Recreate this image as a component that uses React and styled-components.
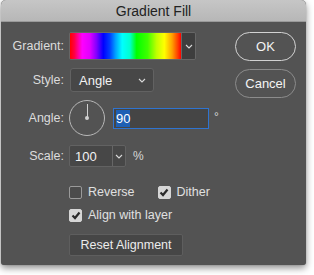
import React from 'react'
import styled, { createGlobalStyle } from 'styled-components'

const Global = createGlobalStyle`
  body {
    margin: 0;
    background: #ffffff;
    font-family: "Liberation Sans", Arial, sans-serif;
  }
`

const Page = styled.div`
  width: 314px;
  height: 275px;
  padding-left: 1px;
  box-sizing: border-box;
`

const Window = styled.div`
  width: 305px;
  height: 265px;
  border-radius: 5px 5px 3px 3px;
  overflow: hidden;
  background: #535353;
  box-shadow: 0 3px 7px rgba(0, 0, 0, 0.45), 0 0 1px rgba(0, 0, 0, 0.4);
  display: flex;
  flex-direction: column;
`

const TitleBar = styled.div`
  height: 22px;
  flex: none;
  background: linear-gradient(#c6c6c6, #b7b7b7);
  border-bottom: 1px solid #9a9a9a;
  box-sizing: border-box;
  display: flex;
  align-items: center;
  justify-content: center;
  font-size: 14px;
  color: #222;
`

const Body = styled.div`
  flex: 1;
  display: flex;
`

const Form = styled.div`
  flex: 1;
  display: flex;
  flex-direction: column;
`

const Row = styled.div`
  display: grid;
  grid-template-columns: 63px 1fr;
  column-gap: 5px;
  align-items: center;
  height: ${p => p.$h}px;
  margin-top: ${p => p.$mt}px;
`

const Label = styled.div`
  text-align: right;
  font-size: 12.5px;
  color: #dcdcdc;
`

const Controls = styled.div`
  display: flex;
  align-items: center;
  height: 100%;
`

const GradientBox = styled.div`
  display: flex;
  width: 127px;
  height: 28px;
  border: 1px solid #666;
  border-radius: 2px;
  box-sizing: border-box;
  overflow: hidden;
`

const Swatch = styled.div`
  flex: 1;
  background: linear-gradient(
    to right,
    #ff0000 0%,
    #ff0044 4%,
    #ff00ff 11%,
    #e000ff 18%,
    #8000ff 24%,
    #0000ff 30%,
    #0040ff 36%,
    #00a0ff 41%,
    #00ffff 47%,
    #00ffd0 54%,
    #00ff00 60%,
    #40ff00 70%,
    #c0ff00 78%,
    #ffff00 85%,
    #ffa000 92%,
    #ff4000 97%,
    #ff0000 100%
  );
`

const Arrow = styled.div`
  width: ${p => p.$w || 14}px;
  flex: none;
  display: flex;
  align-items: center;
  justify-content: center;
  background: ${p => p.$bg || 'transparent'};
  border-left: ${p => (p.$divider ? '1px solid #666' : 'none')};
  height: 100%;
  box-sizing: border-box;
`

const Select = styled.div`
  width: 84px;
  height: 24px;
  margin-left: 1px;
  display: flex;
  align-items: center;
  justify-content: space-between;
  padding: 0 7px 0 8px;
  box-sizing: border-box;
  background: #474747;
  border: 1px solid #626262;
  border-radius: 3px;
  color: #f2f2f2;
  font-size: 13px;
`

const Dial = styled.div`
  position: relative;
  width: 36px;
  height: 36px;
  border: 1px solid #b8b8b8;
  border-radius: 50%;
  box-sizing: border-box;
  flex: none;
`

const Hand = styled.div`
  position: absolute;
  left: 16.5px;
  top: 3px;
  width: 1px;
  height: 14px;
  background: #d0d0d0;
`

const Dot = styled.div`
  position: absolute;
  left: 15px;
  top: 15px;
  width: 4px;
  height: 4px;
  border-radius: 50%;
  background: #d0d0d0;
`

const AngleInput = styled.div`
  width: 96px;
  height: 21px;
  margin-left: 8px;
  display: flex;
  align-items: center;
  padding-left: 2px;
  box-sizing: border-box;
  background: #454545;
  border: 1px solid #2f74d0;
  font-size: 13px;
`

const Selected = styled.span`
  background: #1e5fb4;
  color: #ffffff;
  padding: 1px 0;
  line-height: 15px;
`

const Unit = styled.span`
  color: #d8d8d8;
  font-size: 12px;
  margin-left: ${p => p.$ml}px;
  align-self: ${p => (p.$top ? 'flex-start' : 'center')};
  margin-top: ${p => (p.$top ? 10 : 0)}px;
`

const Combo = styled.div`
  width: 57px;
  height: 22px;
  display: flex;
  align-items: center;
  background: #474747;
  border: 1px solid #626262;
  border-radius: 2px;
  box-sizing: border-box;
  color: #f2f2f2;
  font-size: 13px;
`

const ComboText = styled.div`
  flex: 1;
  padding-left: 5px;
`

const CheckGroup = styled.label`
  display: flex;
  align-items: center;
  gap: 6px;
  margin-right: ${p => p.$mr || 0}px;
  font-size: 12.5px;
  color: #e0e0e0;
`

const Box = styled.span`
  width: 13px;
  height: 13px;
  box-sizing: border-box;
  border-radius: 2px;
  display: flex;
  align-items: center;
  justify-content: center;
  background: ${p => (p.$on ? '#d6d6d6' : '#4b4b4b')};
  border: 1px solid ${p => (p.$on ? '#d6d6d6' : '#9a9a9a')};
`

const ResetButton = styled.div`
  width: 114px;
  height: 22px;
  display: flex;
  align-items: center;
  justify-content: center;
  background: #464646;
  border: 1px solid #5e5e5e;
  border-radius: 2px;
  box-sizing: border-box;
  color: #ececec;
  font-size: 12.5px;
`

const ButtonCol = styled.div`
  width: 61px;
  margin-right: 10px;
  padding-top: 10px;
  display: flex;
  flex-direction: column;
  gap: 8px;
`

const Pill = styled.div`
  height: 29px;
  border-radius: 15px;
  border: 1px solid ${p => (p.$primary ? '#d2d2d2' : '#8c8c8c')};
  box-sizing: border-box;
  display: flex;
  align-items: center;
  justify-content: center;
  color: #f4f4f4;
  font-size: 13px;
`

function Chevron({ color = '#d8d8d8' }) {
  return (
    <svg width="8" height="5" viewBox="0 0 8 5">
      <polyline points="1,1 4,4 7,1" fill="none" stroke={color} strokeWidth="1.1" />
    </svg>
  )
}

function Check() {
  return (
    <svg width="10" height="9" viewBox="0 0 10 9">
      <polyline points="1.5,4.5 4,7 8.5,1.5" fill="none" stroke="#2a2a2a" strokeWidth="2.2" />
    </svg>
  )
}

export default function App() {
  return (
    <Page>
      <Global />
      <Window>
        <TitleBar>Gradient Fill</TitleBar>
        <Body>
          <Form>
            <Row $h={28} $mt={10}>
              <Label>Gradient:</Label>
              <Controls>
                <GradientBox>
                  <Swatch />
                  <Arrow $bg="#3e3e3e" $divider>
                    <Chevron />
                  </Arrow>
                </GradientBox>
              </Controls>
            </Row>
            <Row $h={24} $mt={8}>
              <Label>Style:</Label>
              <Controls>
                <Select>
                  Angle
                  <Chevron />
                </Select>
              </Controls>
            </Row>
            <Row $h={36} $mt={8}>
              <Label>Angle:</Label>
              <Controls>
                <Dial>
                  <Hand />
                  <Dot />
                </Dial>
                <AngleInput>
                  <Selected>90</Selected>
                </AngleInput>
                <Unit $ml={5} $top>°</Unit>
              </Controls>
            </Row>
            <Row $h={22} $mt={9}>
              <Label>Scale:</Label>
              <Controls>
                <Combo>
                  <ComboText>100</ComboText>
                  <Arrow $w={13} $divider>
                    <Chevron />
                  </Arrow>
                </Combo>
                <Unit $ml={7}>%</Unit>
              </Controls>
            </Row>
            <Row $h={13} $mt={18}>
              <span />
              <Controls>
                <CheckGroup $mr={23}>
                  <Box />
                  Reverse
                </CheckGroup>
                <CheckGroup>
                  <Box $on>
                    <Check />
                  </Box>
                  Dither
                </CheckGroup>
              </Controls>
            </Row>
            <Row $h={13} $mt={10}>
              <span />
              <Controls>
                <CheckGroup>
                  <Box $on>
                    <Check />
                  </Box>
                  Align with layer
                </CheckGroup>
              </Controls>
            </Row>
            <Row $h={22} $mt={13}>
              <span />
              <Controls>
                <ResetButton>Reset Alignment</ResetButton>
              </Controls>
            </Row>
          </Form>
          <ButtonCol>
            <Pill $primary>OK</Pill>
            <Pill>Cancel</Pill>
          </ButtonCol>
        </Body>
      </Window>
    </Page>
  )
}
